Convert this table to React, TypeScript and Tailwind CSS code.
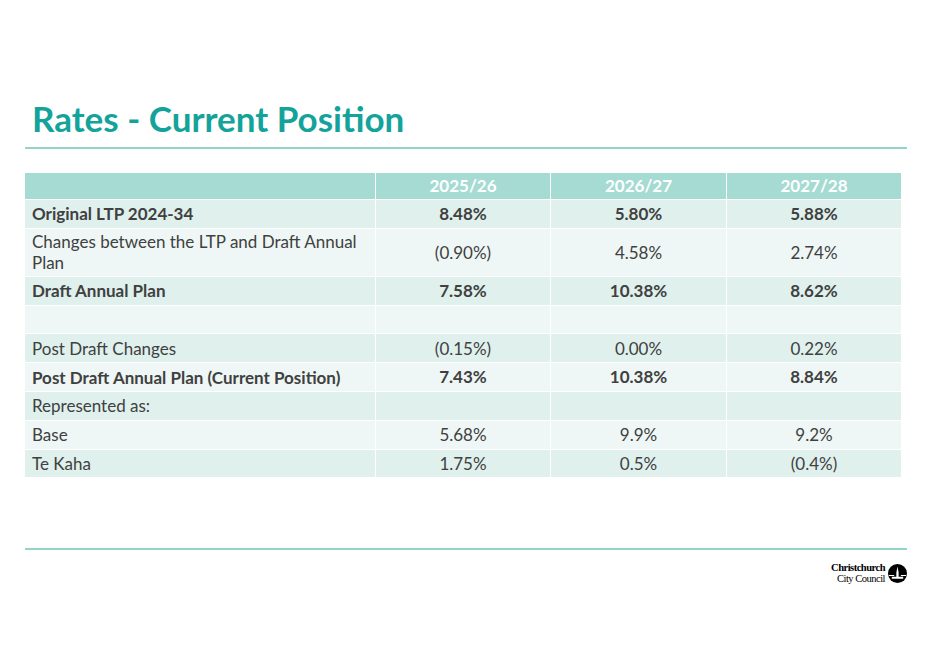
import React from "react";

type Row = { label: string; vals: string[]; bold?: boolean; tall?: boolean };

const rows: Row[] = [
    { label: "Original LTP 2024-34", vals: ["8.48%", "5.80%", "5.88%"], bold: true },
    { label: "Changes between the LTP and Draft Annual Plan", vals: ["(0.90%)", "4.58%", "2.74%"], tall: true },
    { label: "Draft Annual Plan", vals: ["7.58%", "10.38%", "8.62%"], bold: true },
    { label: "", vals: ["", "", ""] },
    { label: "Post Draft Changes", vals: ["(0.15%)", "0.00%", "0.22%"] },
    { label: "Post Draft Annual Plan (Current Position)", vals: ["7.43%", "10.38%", "8.84%"], bold: true },
    { label: "Represented as:", vals: ["", "", ""] },
    { label: "Base", vals: ["5.68%", "9.9%", "9.2%"] },
    { label: "Te Kaha", vals: ["1.75%", "0.5%", "(0.4%)"] },
];

const Logo = () => (
    <div className="flex items-center gap-[3px]">
        <div className="flex flex-col items-end font-['Liberation_Serif',serif] text-[10.5px] leading-[11px] text-black tracking-[-0.5px]">
            <span className="font-bold">Christchurch</span>
            <span>City Council</span>
        </div>
        <svg width="19" height="19" viewBox="0 0 20 20">
            <circle cx="10" cy="10" r="10" fill="#000" />
            <path d="M10 2.5 L11.2 9 L11.2 13.5 L16 13.5 L16 15.5 L4 15.5 L4 13.5 L8.8 13.5 L8.8 9 Z" fill="#fff" />
            <path d="M1 11.5 L6.5 11.5 L6.5 12.5 L1 12.5 Z M13.5 11.5 L19 11.5 L19 12.5 L13.5 12.5 Z" fill="#fff" />
        </svg>
    </div>
);

const App = () => {
    return (
        <div className="w-[934px] h-[661px] bg-white font-['Lato',sans-serif] text-[#404040] pt-[98px] px-[25px]">
            <h1 className="pl-[7px] text-[35px] leading-[40px] font-bold text-[#13a39b]">Rates - Current Position</h1>
            <div className="mt-[9px] h-[2px] w-[882px] bg-[#93d3c9]" />

            <div className="mt-[24px] w-[875px] grid grid-cols-[350px_174px_175px_174px] gap-[1px] bg-white">
                <div className="h-[26px] bg-[#a6dbd4]" />
                {["2025/26", "2026/27", "2027/28"].map((y) => (
                    <div key={y} className="h-[26px] bg-[#a6dbd4] flex items-center justify-center text-white font-bold text-[17px]">
                        {y}
                    </div>
                ))}
                {rows.map((r, i) => {
                    const bg = i % 2 === 0 ? "bg-[#dff0ed]" : "bg-[#eef7f5]";
                    const h = r.tall ? "h-[47px]" : "h-[27.8px]";
                    return (
                        <React.Fragment key={i}>
                            <div className={`${bg} ${h} flex items-center pl-[7px] pr-[14px] text-[17px] leading-[21px] ${r.bold ? "font-bold" : ""}`}>
                                {r.label}
                            </div>
                            {r.vals.map((v, j) => (
                                <div key={j} className={`${bg} ${h} flex items-center justify-center text-[17px] ${r.bold ? "font-bold" : ""}`}>
                                    {v}
                                </div>
                            ))}
                        </React.Fragment>
                    );
                })}
            </div>

            <div className="mt-[71px] h-[2px] w-[882px] bg-[#93d3c9]" />
            <div className="mt-[12px] w-[882px] flex justify-end">
                <Logo />
            </div>
        </div>
    );
};

export default App;
